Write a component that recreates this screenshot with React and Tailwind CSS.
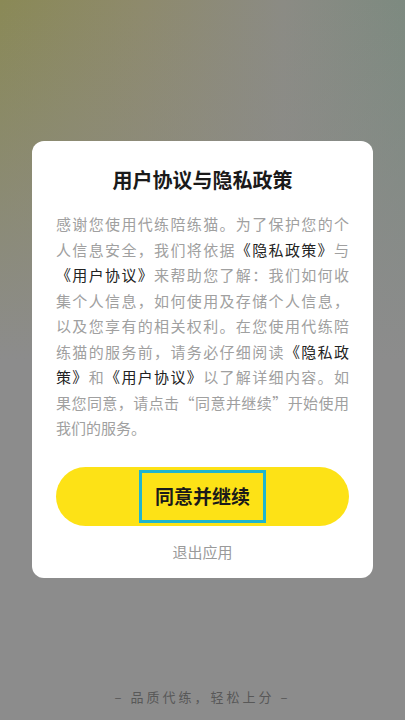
const lines = [
  [['感谢您使用代练陪练猫。为了保护您的个']],
  [['人信息安全，我们将依据'], ['《隐私政策》', true], ['与']],
  [['《用户协议》', true], ['来帮助您了解：我们如何收']],
  [['集个人信息，如何使用及存储个人信息，']],
  [['以及您享有的相关权利。在您使用代练陪']],
  [['练猫的服务前，请务必仔细阅读'], ['《隐私政', true]],
  [['策》', true], ['和'], ['《用户协议》', true], ['以了解详细内容。如']],
  [['果您同意，请点击“同意并继续”开始使用']],
]

function PolicyText() {
  return (
    <div className="mt-[17px] text-[15px] leading-[25.5px] text-[#a0a0a0]">
      {lines.map((parts, i) => (
        <div key={i} className="text-justify [text-align-last:justify]">
          {parts.map(([t, bold], j) => (
            <span key={j} className={bold ? 'text-[#222]' : ''}>
              {t}
            </span>
          ))}
        </div>
      ))}
      <div>我们的服务。</div>
    </div>
  )
}

export default function App() {
  return (
    <div
      className="flex min-h-screen flex-col bg-[#8c8c8c] bg-[linear-gradient(180deg,rgba(140,140,140,0)_0%,#8c8c8c_50%),linear-gradient(90deg,#8a8956_0%,#8e8a6c_35%,#8b8b84_70%,#7d8a80_100%)]"
      style={{ fontFamily: '"Noto Sans CJK SC", "Noto Sans", sans-serif' }}
    >
      <div className="mx-[32px] mt-[141px] rounded-[12px] bg-white px-[24px] pb-[13px] pt-[25px]">
        <h1 className="text-center text-[20px] font-bold leading-[28px] text-[#1a1a1a]">
          用户协议与隐私政策
        </h1>
        <PolicyText />
        <button className="mt-[26px] flex h-[59px] w-full items-center justify-center rounded-full bg-[#fde216]">
          <span className="flex h-[53px] items-center border-[3px] border-[#1fb5cf] px-[13px] text-[19px] font-bold text-[#1a1a1a]">
            同意并继续
          </span>
        </button>
        <div className="mt-[13px] text-center text-[15px] leading-[26px] text-[#9a9a9a]">
          退出应用
        </div>
      </div>
      <div className="flex-1" />
      <div className="pb-[13px] text-center text-[13px] leading-[20px] tracking-[3px] text-[#585858]">
        – 品质代练，轻松上分 –
      </div>
    </div>
  )
}
